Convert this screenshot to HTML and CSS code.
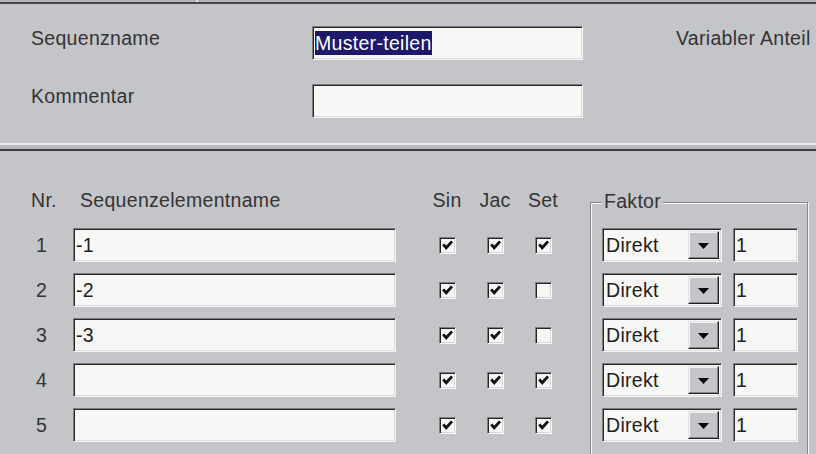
FILE: index.html
```html
<!DOCTYPE html>
<html lang="de">
<head>
    <meta charset="UTF-8">
    <meta name="viewport" content="width=device-width, initial-scale=1.0">
    <title>Sequenz bearbeiten</title>
    <link rel="stylesheet" href="styles.css">
</head>
<body>
    <div class="tabstrip"><span class="tab-end"></span></div>

    <div class="header">
        <label class="label">Sequenzname</label>
        <div class="field"><span class="selected">Muster-teilen</span></div>
        <span class="label variable">Variabler Anteil</span>
        <label class="label">Kommentar</label>
        <div class="field"></div>
    </div>

    <div class="separator"></div>

    <div class="elements">
        <div class="element-grid">
            <span class="col-head">Nr.</span>
            <span class="col-head name-head">Sequenzelementname</span>
            <span class="col-head center">Sin</span>
            <span class="col-head center">Jac</span>
            <span class="col-head center">Set</span>

            <span class="nr">1</span>
            <div class="field">-1</div>
            <span class="check on"><svg viewBox="0 0 15 15"><path d="M3.2 6.4 L6.2 9.8 L12 3.4"/></svg></span>
            <span class="check on"><svg viewBox="0 0 15 15"><path d="M3.2 6.4 L6.2 9.8 L12 3.4"/></svg></span>
            <span class="check on"><svg viewBox="0 0 15 15"><path d="M3.2 6.4 L6.2 9.8 L12 3.4"/></svg></span>

            <span class="nr">2</span>
            <div class="field">-2</div>
            <span class="check on"><svg viewBox="0 0 15 15"><path d="M3.2 6.4 L6.2 9.8 L12 3.4"/></svg></span>
            <span class="check on"><svg viewBox="0 0 15 15"><path d="M3.2 6.4 L6.2 9.8 L12 3.4"/></svg></span>
            <span class="check"></span>

            <span class="nr">3</span>
            <div class="field">-3</div>
            <span class="check on"><svg viewBox="0 0 15 15"><path d="M3.2 6.4 L6.2 9.8 L12 3.4"/></svg></span>
            <span class="check on"><svg viewBox="0 0 15 15"><path d="M3.2 6.4 L6.2 9.8 L12 3.4"/></svg></span>
            <span class="check"></span>

            <span class="nr">4</span>
            <div class="field"></div>
            <span class="check on"><svg viewBox="0 0 15 15"><path d="M3.2 6.4 L6.2 9.8 L12 3.4"/></svg></span>
            <span class="check on"><svg viewBox="0 0 15 15"><path d="M3.2 6.4 L6.2 9.8 L12 3.4"/></svg></span>
            <span class="check on"><svg viewBox="0 0 15 15"><path d="M3.2 6.4 L6.2 9.8 L12 3.4"/></svg></span>

            <span class="nr">5</span>
            <div class="field"></div>
            <span class="check on"><svg viewBox="0 0 15 15"><path d="M3.2 6.4 L6.2 9.8 L12 3.4"/></svg></span>
            <span class="check on"><svg viewBox="0 0 15 15"><path d="M3.2 6.4 L6.2 9.8 L12 3.4"/></svg></span>
            <span class="check on"><svg viewBox="0 0 15 15"><path d="M3.2 6.4 L6.2 9.8 L12 3.4"/></svg></span>
        </div>

        <div class="faktor-box">
            <span class="faktor-title">Faktor</span>
            <div class="faktor-grid">
                <div class="combo"><span class="combo-text">Direkt</span><span class="combo-btn"><svg viewBox="0 0 11 6"><polygon points="0,0 11,0 5.5,6"/></svg></span></div>
                <div class="field">1</div>
                <div class="combo"><span class="combo-text">Direkt</span><span class="combo-btn"><svg viewBox="0 0 11 6"><polygon points="0,0 11,0 5.5,6"/></svg></span></div>
                <div class="field">1</div>
                <div class="combo"><span class="combo-text">Direkt</span><span class="combo-btn"><svg viewBox="0 0 11 6"><polygon points="0,0 11,0 5.5,6"/></svg></span></div>
                <div class="field">1</div>
                <div class="combo"><span class="combo-text">Direkt</span><span class="combo-btn"><svg viewBox="0 0 11 6"><polygon points="0,0 11,0 5.5,6"/></svg></span></div>
                <div class="field">1</div>
                <div class="combo"><span class="combo-text">Direkt</span><span class="combo-btn"><svg viewBox="0 0 11 6"><polygon points="0,0 11,0 5.5,6"/></svg></span></div>
                <div class="field">1</div>
            </div>
        </div>
    </div>
</body>
</html>
```

FILE: styles.css
```css
html, body {
    margin: 0;
    padding: 0;
}
body {
    width: 816px;
    height: 454px;
    overflow: hidden;
    background-color: #c4c5c9;
    font-family: "Liberation Sans", Arial, sans-serif;
    font-size: 19.5px;
    letter-spacing: 0.3px;
    color: #333;
}

/* strip left over from the tab control above */
.tabstrip {
    height: 2px;
    background-color: #b4b5b9;
    border-bottom: 2px solid #45464a;
}
.tab-end {
    display: block;
    width: 196px;
    height: 2px;
    border-right: 2px solid #ececec;
}

.header {
    display: grid;
    grid-template-columns: 281px 271px 1fr;
    grid-template-rows: 34px 34px;
    row-gap: 24px;
    padding: 22px 0 25px 31px;
}
.label {
    line-height: 23px;
    white-space: nowrap;
    margin-top: 1px;
}
.variable {
    margin-left: 93px;
}

.separator {
    height: 4px;
    background-color: #b9babe;
    border-top: 2px solid #ececec;
    border-bottom: 2px solid #3d3e42;
}

/* sunken edit field */
.field {
    box-sizing: border-box;
    height: 34px;
    display: flex;
    align-items: center;
    padding-left: 2px;
    background-color: #f7f7f5;
    color: #1e1e1e;
    border: 1px solid;
    border-color: #7d7e82 #f4f4f4 #f4f4f4 #7d7e82;
    box-shadow: inset 1px 1px 0 #262626, inset -1px -1px 0 #dcdddf;
    white-space: nowrap;
}
.selected {
    display: inline-block;
    line-height: 24px;
    background-color: #1d186c;
    color: #fff;
}

.elements {
    display: flex;
    align-items: flex-start;
    padding-top: 32px;
}
.element-grid {
    display: grid;
    grid-template-columns: 42px 350px 48px 48px 48px;
    grid-auto-rows: 34px;
    row-gap: 11px;
    padding-left: 31px;
}
.element-grid .field {
    width: 323px;
}
.col-head {
    align-self: center;
    line-height: 23px;
    white-space: nowrap;
}
.name-head {
    padding-left: 7px;
}
.center {
    justify-self: center;
}
.nr {
    align-self: center;
    padding-left: 5px;
    line-height: 23px;
}

/* classic checkbox */
.check {
    box-sizing: border-box;
    width: 17px;
    height: 17px;
    align-self: center;
    justify-self: center;
    background-color: #f6f6f4;
    border: 1px solid;
    border-color: #7d7e82 #fafafa #fafafa #7d7e82;
    box-shadow: inset 1px 1px 0 #262626, inset -1px -1px 0 #d6d7d9;
}
.check svg {
    display: block;
    width: 15px;
    height: 15px;
}
.check path {
    fill: none;
    stroke: #111;
    stroke-width: 2.8;
}

/* group box */
.faktor-box {
    box-sizing: border-box;
    width: 218px;
    margin: 19px 0 0 23px;
    padding: 0 9px 20px 11px;
    border: 1px solid #86878b;
    box-shadow: inset 1px 1px 0 #f6f6f6, 1px 1px 0 #f6f6f6;
}
.faktor-title {
    display: block;
    width: fit-content;
    margin-top: -13px;
    padding: 0 2px;
    line-height: 23px;
    background-color: #c4c5c9;
}
.faktor-grid {
    display: grid;
    grid-template-columns: 120px 65px;
    grid-auto-rows: 34px;
    column-gap: 11px;
    row-gap: 11px;
    margin-top: 15px;
}

.combo {
    box-sizing: border-box;
    height: 34px;
    display: flex;
    align-items: center;
    padding: 0 2px 0 3px;
    background-color: #f7f7f5;
    color: #1e1e1e;
    border: 1px solid;
    border-color: #7d7e82 #f4f4f4 #f4f4f4 #7d7e82;
    box-shadow: inset 1px 1px 0 #262626, inset -1px -1px 0 #dcdddf;
}
.combo-text {
    flex: 1;
}
.combo-btn {
    box-sizing: border-box;
    width: 31px;
    height: 28px;
    display: flex;
    align-items: center;
    justify-content: center;
    background-color: #c4c5c9;
    border: 1px solid;
    border-color: #e2e3e5 #1e1e1e #1e1e1e #e2e3e5;
    box-shadow: inset -1px -1px 0 #86878b, inset 1px 1px 0 #f4f4f4;
}
.combo-btn svg {
    width: 11px;
    height: 6px;
    margin-top: 1px;
}
```
